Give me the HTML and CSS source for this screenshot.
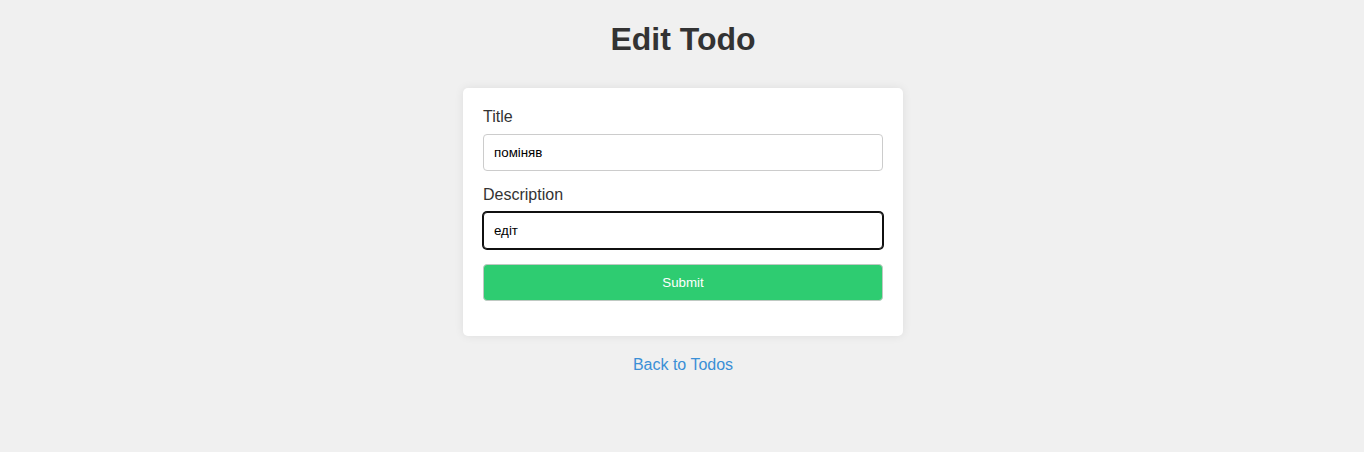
FILE: index.html
```html
<!DOCTYPE html>
<html lang="uk">
<head>
<meta charset="utf-8">
<title>Edit Todo</title>
<link rel="stylesheet" href="styles.css">
</head>
<body>
<main class="page">
  <h1 class="page-title">Edit Todo</h1>
  <form class="card">
    <label class="field-label" for="title">Title</label>
    <input class="field-input" id="title" type="text" value="поміняв">
    <label class="field-label" for="desc">Description</label>
    <input class="field-input is-focused" id="desc" type="text" value="едіт">
    <button class="submit-btn" type="button">Submit</button>
  </form>
  <a class="back-link" href="#">Back to Todos</a>
</main>
</body>
</html>
```

FILE: styles.css
```css
* { box-sizing: border-box; }
html, body {
  margin: 0;
  padding: 0;
  background: #f0f0f0;
  font-family: "Liberation Sans", Arial, sans-serif;
  color: #333;
}
.page {
  display: flex;
  flex-direction: column;
  align-items: center;
  padding-left: 2px;
}
.page-title {
  margin: 21px 0 30px;
  font-size: 32px;
  line-height: 37px;
  font-weight: bold;
  color: #333;
}
.card {
  width: 440px;
  background: #fff;
  border-radius: 5px;
  padding: 20px;
  box-shadow: 0 0 10px rgba(0, 0, 0, 0.08);
  display: flex;
  flex-direction: column;
}
.field-label {
  display: block;
  font-size: 16px;
  line-height: 18px;
  margin-bottom: 8px;
  color: #333;
}
.field-input {
  width: 100%;
  height: 37px;
  padding: 0 10px;
  font-family: "Liberation Sans", Arial, sans-serif;
  font-size: 13.333px;
  color: #000;
  border: 1px solid #ccc;
  border-radius: 4px;
  margin: 0 0 15px;
  background: #fff;
  outline: none;
}
.field-input.is-focused {
  border-color: #101010;
  box-shadow: 0 0 0 1px #101010;
}
.submit-btn {
  width: 100%;
  height: 37px;
  background: #2ecc71;
  color: #fff;
  border: 1px solid #bfc9c2;
  border-radius: 4px;
  font-family: "Liberation Sans", Arial, sans-serif;
  font-size: 13.333px;
  margin-bottom: 15px;
  cursor: pointer;
}
.back-link {
  margin-top: 20px;
  font-size: 16px;
  line-height: 18px;
  color: #3a8fd6;
  text-decoration: none;
}
```
